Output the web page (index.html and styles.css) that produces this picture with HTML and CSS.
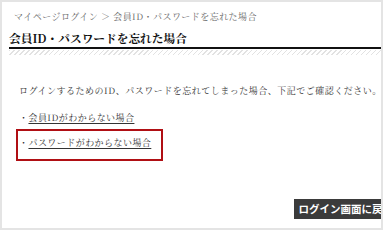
FILE: index.html
```html
<!DOCTYPE html>
<html lang="ja">
<head>
<meta charset="utf-8">
<link rel="stylesheet" href="styles.css">
</head>
<body>
<div class="frame">
  <div class="breadcrumb">マイページログイン ＞ 会員ID・パスワードを忘れた場合</div>
  <h1 class="title">会員ID・パスワードを忘れた場合</h1>
  <div class="rule"></div>
  <div class="hatch"></div>
  <p class="lead">ログインするためのID、パスワードを忘れてしまった場合、下記でご確認ください。</p>
  <ul class="links">
    <li class="item">・<a class="link" href="#">会員IDがわからない場合</a></li>
    <li class="item item-boxed">・<a class="link" href="#">パスワードがわからない場合</a></li>
  </ul>
  <div class="actions">
    <a class="back-btn" href="#">ログイン画面に戻る</a>
  </div>
</div>
</body>
</html>
```

FILE: styles.css
```css
html, body {
  margin: 0;
  padding: 0;
  background: #ffffff;
}

.frame {
  box-sizing: border-box;
  width: 383px;
  height: 230px;
  border: 2px solid #e4e4e4;
  overflow: hidden;
  background: #ffffff;
  font-family: "Noto Serif CJK JP", "Noto Sans CJK JP", serif;
  color: #333333;
}

.breadcrumb {
  margin: 8px 0 0 12px;
  font-size: 9px;
  line-height: 14px;
  letter-spacing: 0.45px;
  color: #666666;
}

.title {
  margin: 6px 0 0 7px;
  font-size: 11.7px;
  line-height: 16px;
  font-weight: bold;
  color: #111111;
}

.rule {
  margin: 1px 0 0 7px;
  height: 2px;
  background: #111111;
}

.hatch {
  margin: 1px 0 0 7px;
  height: 5px;
  background: repeating-linear-gradient(135deg, #e2e2e2 0 1px, #ffffff 1px 3.5px);
}

.lead {
  margin: 29px 0 0 17px;
  font-size: 9px;
  line-height: 14px;
  letter-spacing: 0.5px;
  color: #333333;
  white-space: nowrap;
}

.links {
  list-style: none;
  margin: 13px 0 0 0;
  padding: 0;
}

.item {
  font-size: 9px;
  line-height: 14px;
  letter-spacing: 0.45px;
  color: #333333;
  padding-left: 17px;
}

.item-boxed {
  box-sizing: border-box;
  width: 147px;
  margin: 4px 0 0 14px;
  padding: 5px 0 9px 1px;
  border: 2px solid #b00f14;
}

.link {
  color: #333333;
  text-decoration: underline;
  text-underline-offset: 2px;
}

.actions {
  display: flex;
  justify-content: flex-end;
  margin: 38px -18px 0 0;
}

.back-btn {
  display: block;
  height: 20px;
  padding: 0 6px 0 5px;
  background: #3b3b3b;
  color: #ffffff;
  font-family: "Noto Sans CJK JP", sans-serif;
  font-weight: bold;
  font-size: 10.5px;
  line-height: 20px;
  text-decoration: none;
  white-space: nowrap;
}
```
